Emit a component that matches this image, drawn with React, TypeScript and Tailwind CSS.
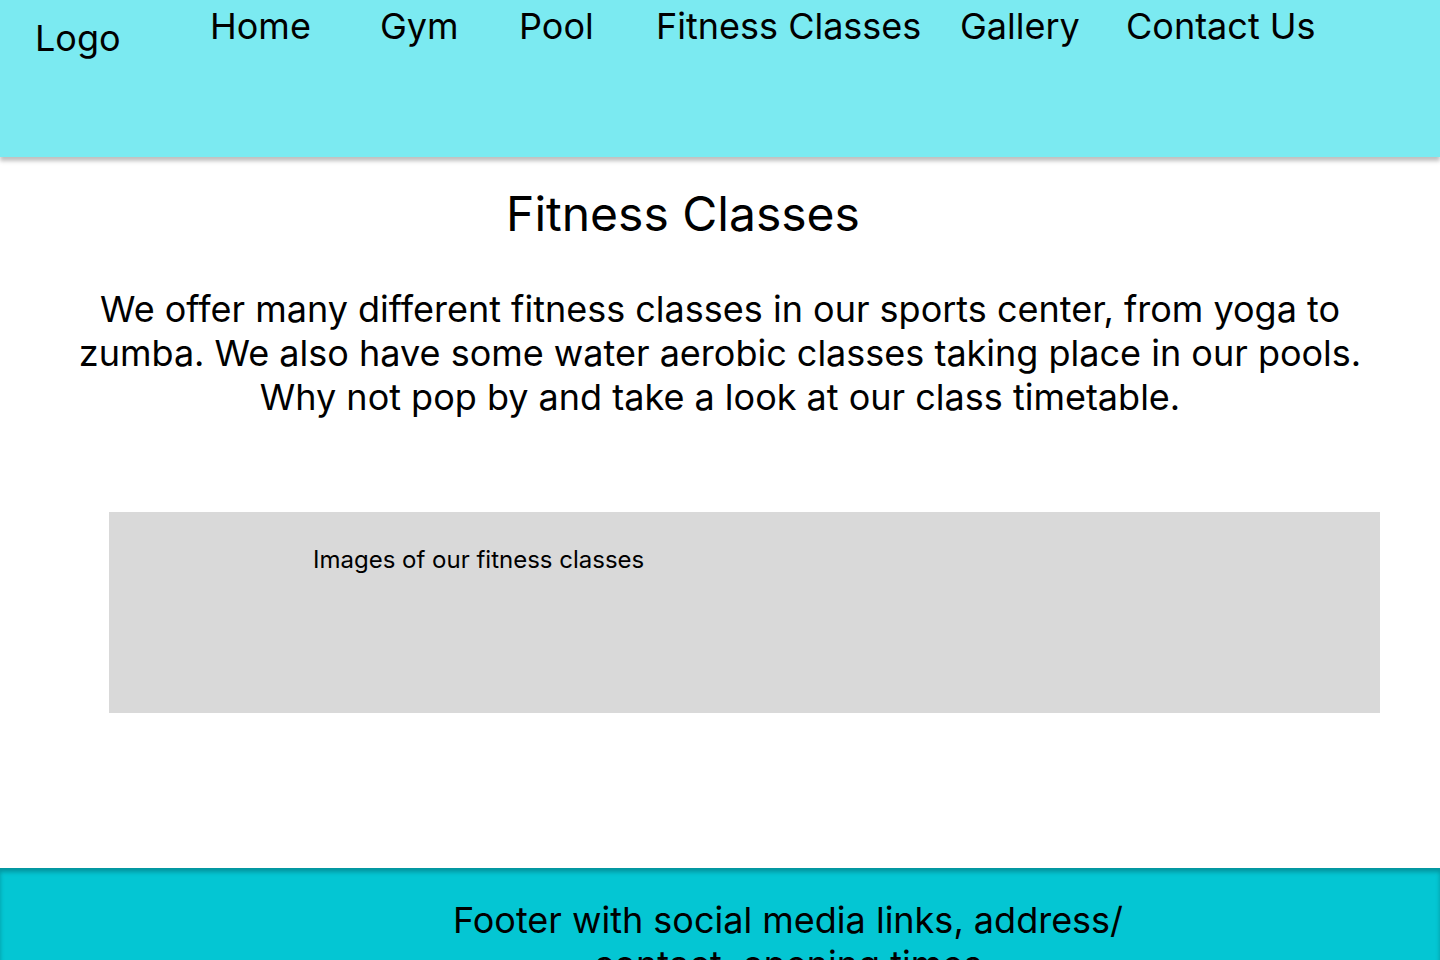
export default function App() {
  const font = { fontFamily: "Inter, 'Noto Sans', sans-serif" };
  return (
    <div className="w-[1440px] h-[960px] overflow-hidden bg-white text-black" style={font}>
      <header className="h-[157px] bg-[#7beaf1] shadow-[0_4px_4px_rgba(0,0,0,0.25)] relative z-10 flex items-start">
        <div className="w-[175px] pl-[35px] pt-[16px] text-[36px] leading-[44px] box-content">Logo</div>
        <nav className="flex items-start pt-[4px] text-[36px] leading-[44px]">
          <span className="w-[170px]">Home</span>
          <span className="w-[139px]">Gym</span>
          <span className="w-[137px]">Pool</span>
          <span className="w-[304px]">Fitness Classes</span>
          <span className="w-[166px]">Gallery</span>
          <span>Contact Us</span>
        </nav>
      </header>
      <main>
        <h1 className="pt-[28px] pr-[74px] text-center text-[48px] leading-[58px] font-normal">Fitness Classes</h1>
        <p className="mt-[44px] px-[75px] text-center text-[36px] leading-[44px]">
          We offer many different fitness classes in our sports center, from yoga to zumba. We also have some water aerobic classes taking place in our pools. Why not pop by and take a look at our class timetable.
        </p>
        <div className="mt-[93px] ml-[109px] w-[1271px] h-[201px] bg-[#d9d9d9] pt-[33px] pl-[204px] text-[24px] leading-[29px]">
          Images of our fitness classes
        </div>
      </main>
      <footer className="mt-[155px] h-[200px] bg-[#04c6d3] shadow-[inset_0_4px_4px_rgba(0,0,0,0.25)] pt-[30px]">
        <div className="ml-[438px] w-[700px] text-center text-[36px] leading-[44px]">
          Footer with social media links, address/ contact, opening times
        </div>
      </footer>
    </div>
  );
}
